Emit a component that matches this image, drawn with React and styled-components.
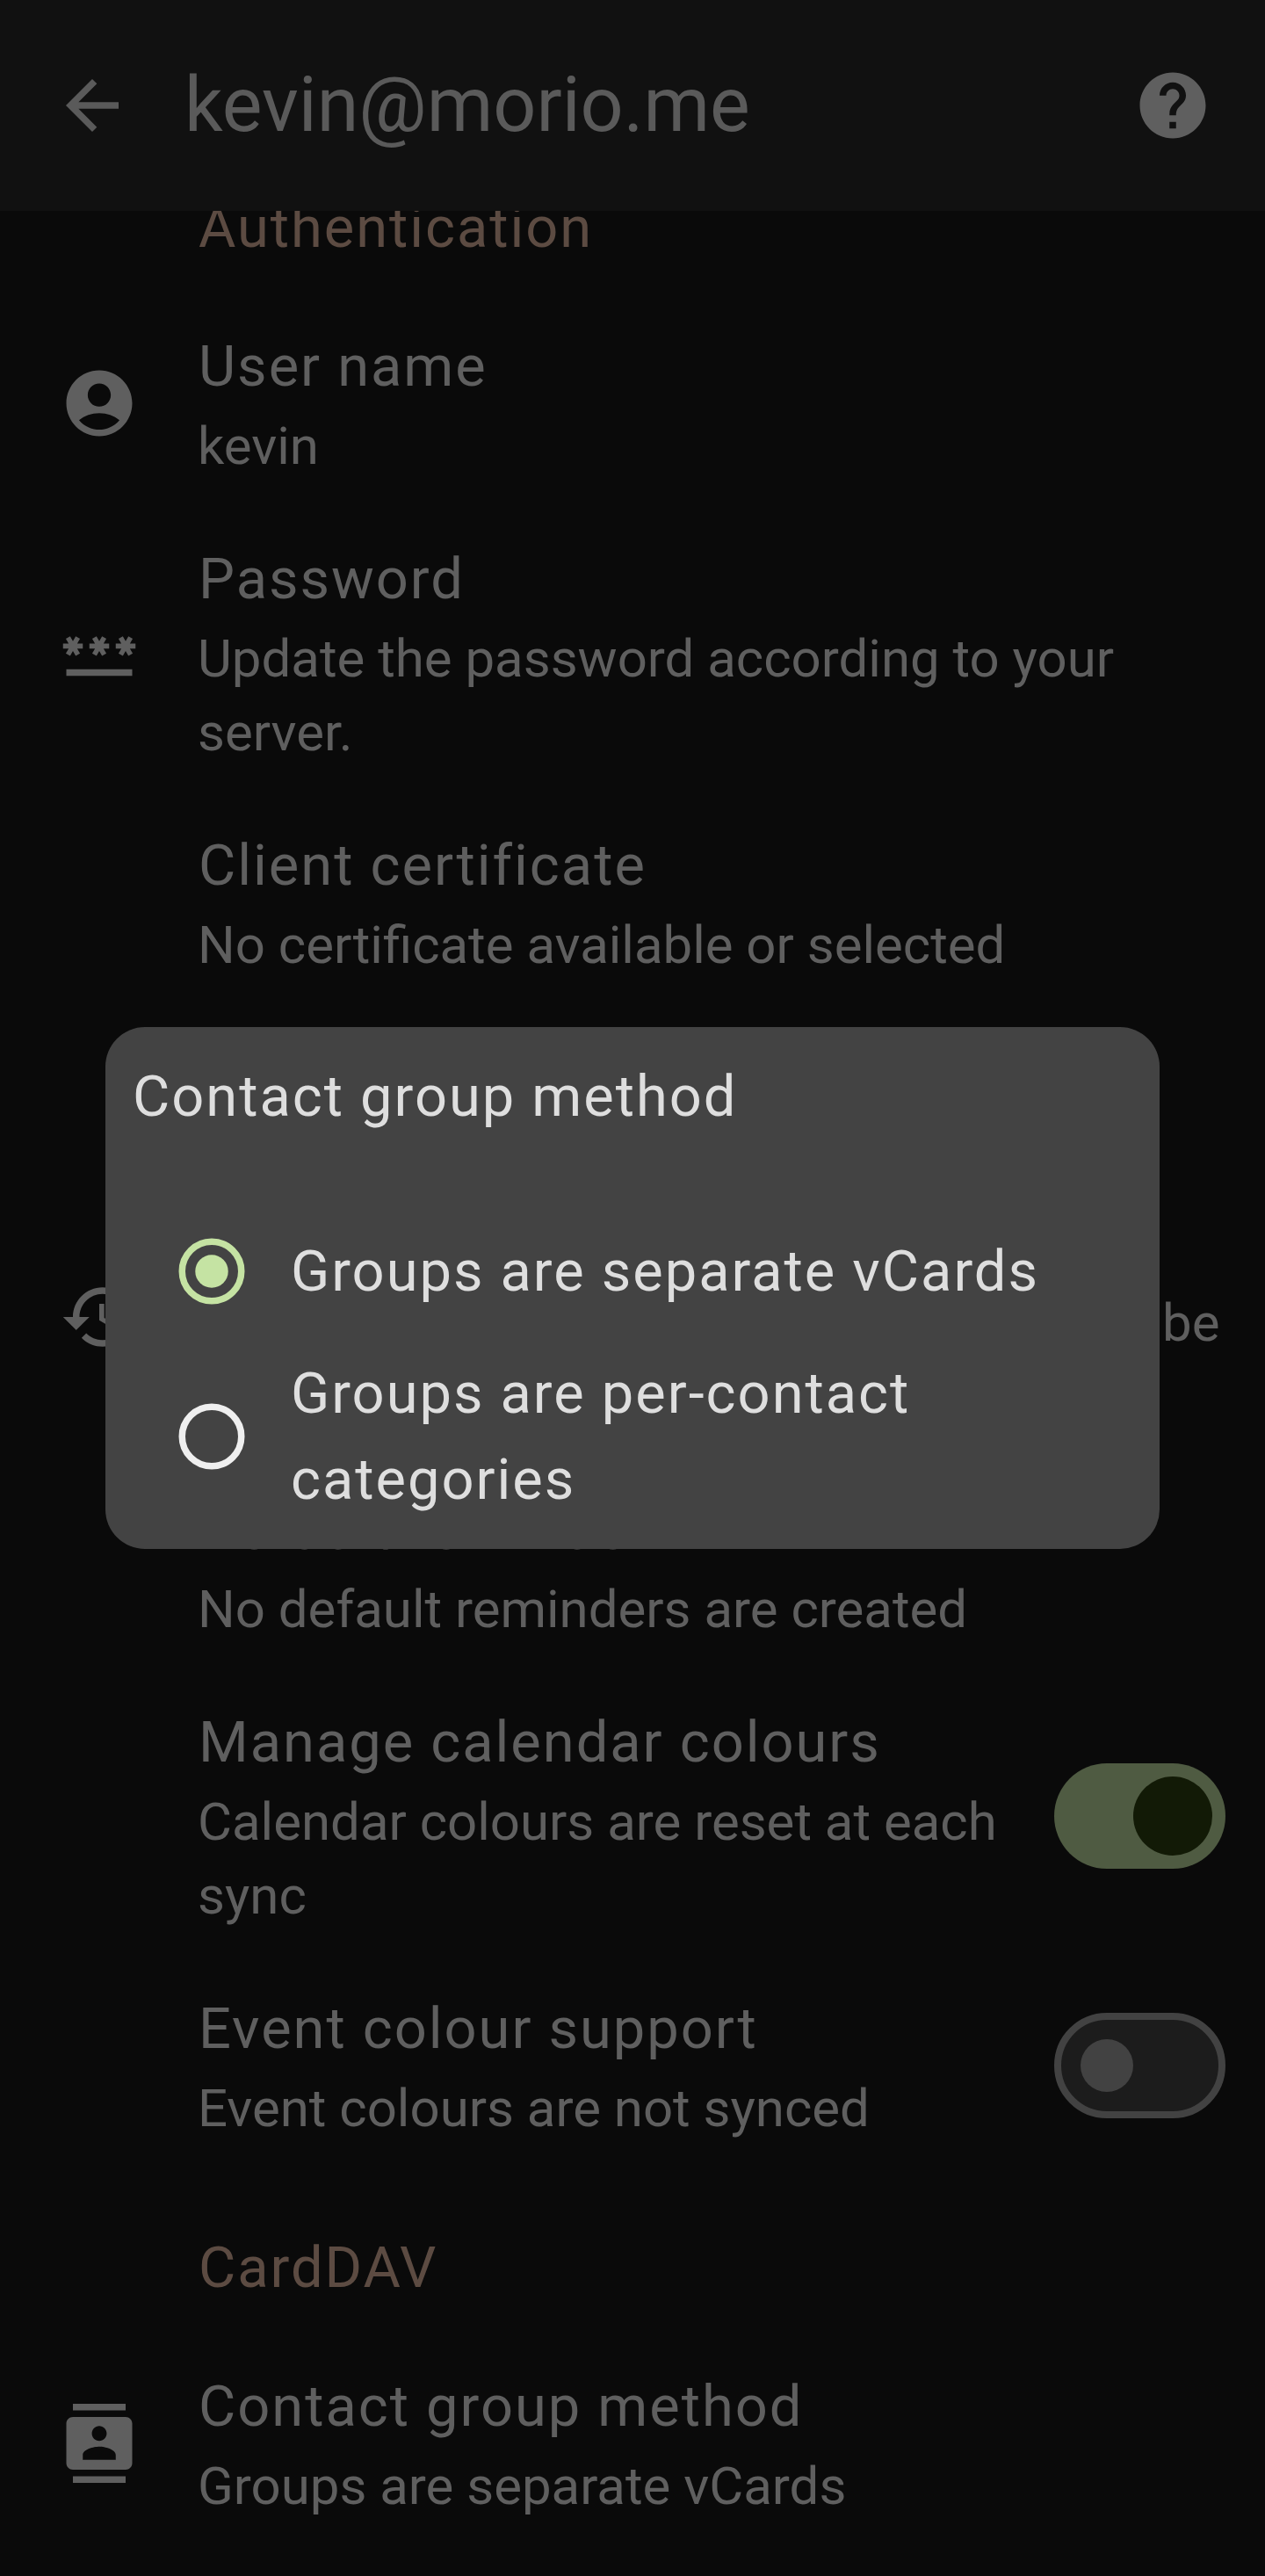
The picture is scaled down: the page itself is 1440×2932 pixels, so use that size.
import React from "react";
import styled, { createGlobalStyle } from "styled-components";

const GlobalStyle = createGlobalStyle`
  * { box-sizing: border-box; }
  html, body { margin: 0; padding: 0; background: #0a0a0a; }
  body { font-family: Roboto, "Noto Sans", sans-serif; font-weight: 400; overflow: hidden; }
`;

const Screen = styled.div`
  position: relative;
  width: 1440px;
  height: 2932px;
  overflow: hidden;
  background: #0a0a0a;
  color: #5f5f5f;
`;

const TopBar = styled.header`
  position: relative;
  z-index: 1;
  display: flex;
  align-items: center;
  height: 240px;
  padding: 0 60px;
  background: #111111;
`;

const AccountTitle = styled.h1`
  flex: 1;
  margin: 0 0 0 60px;
  font-size: 86.2px;
  font-weight: 400;
  line-height: 120px;
  color: #5a5a5a;
`;

const Icon = styled.svg`
  display: block;
  flex: none;
  width: 90px;
  height: 90px;
  fill: ${(p) => p.$color || "#5f5f5f"};
  overflow: visible;
`;

const Settings = styled.main`
  display: flex;
  flex-direction: column;
  margin-top: -90px;
`;

const SectionTitle = styled.h2`
  min-height: 188px;
  margin: 0;
  padding: 60px 0 30px 226px;
  font-size: 65px;
  font-weight: 400;
  line-height: 98px;
  letter-spacing: 1.95px;
  color: #5c4b42;
`;

const Row = styled.div`
  display: flex;
  align-items: center;
  padding: 30px 45px 30px 0;
`;

const Leading = styled.div`
  display: flex;
  flex: none;
  width: 225px;
  padding-left: 68px;
`;

const Texts = styled.div`
  flex: 1;
  min-width: 0;
`;

const RowTitle = styled.div`
  min-height: 98px;
  padding-left: 1px;
  font-size: 65px;
  line-height: 98px;
  letter-spacing: 1.97px;
  white-space: nowrap;
`;

const Summary = styled.div`
  min-height: ${(p) => p.$lines * 84}px;
  font-size: 59.95px;
  line-height: 84px;
  white-space: pre-line;
`;

const SwitchTrack = styled.div`
  display: flex;
  flex: none;
  align-items: center;
  justify-content: ${(p) => (p.$on ? "flex-end" : "flex-start")};
  width: 195px;
  height: 120px;
  padding: 0 ${(p) => (p.$on ? 15 : 22)}px;
  border: ${(p) => (p.$on ? "0" : "8px solid #424242")};
  border-radius: 60px;
  background: ${(p) => (p.$on ? "#4f5b42" : "#1c1c1c")};
`;

const SwitchThumb = styled.div`
  width: ${(p) => (p.$on ? 90 : 60)}px;
  height: ${(p) => (p.$on ? 90 : 60)}px;
  border-radius: 50%;
  background: ${(p) => (p.$on ? "#121a06" : "#424242")};
`;

const Scrim = styled.div`
  position: absolute;
  inset: 0;
  z-index: 2;
  display: flex;
  align-items: center;
  justify-content: center;
`;

const Dialog = styled.section`
  width: 1200px;
  padding: 30px;
  border-radius: 45px;
  background: #434343;
  color: #dedede;
`;

const DialogTitle = styled.h2`
  margin: 0 0 60px;
  padding-left: 1px;
  font-size: 65px;
  font-weight: 400;
  line-height: 98px;
  letter-spacing: 1.97px;
`;

const Option = styled.div`
  display: flex;
  align-items: center;
  min-height: 180px;
`;

const RadioSlot = styled.div`
  display: flex;
  flex: none;
  align-items: center;
  justify-content: center;
  width: 180px;
  padding-left: 1px;
`;

const RadioRing = styled.svg`
  display: block;
  width: 90px;
  height: 90px;
  color: ${(p) => (p.$selected ? "#c5e3a3" : "#efefef")};
`;

const OptionLabel = styled.div`
  flex: 1;
  padding-left: 1px;
  font-size: 65px;
  line-height: 98px;
  letter-spacing: 1.97px;
`;

const paths = {
  back: "M20,11H7.83l5.59-5.59L12,4l-8,8 8,8 1.41-1.41L7.83,13H20v-2z",
  help: "M12,2C6.48,2 2,6.48 2,12s4.48,10 10,10 10-4.48 10-10S17.52,2 12,2zM13,19h-2v-2h2v2zM15.07,11.25l-0.9,0.92C13.45,12.9 13,13.5 13,15h-2v-0.5c0-1.1 0.45-2.1 1.17-2.83l1.24-1.26c0.37-0.36 0.59-0.86 0.59-1.41 0-1.1-0.9-2-2-2s-2,0.9-2,2L8,9c0-2.21 1.79-4 4-4s4,1.79 4,4c0,0.88-0.36,1.68-0.93,2.25z",
  account:
    "M12,2C6.48,2 2,6.48 2,12s4.48,10 10,10 10-4.48 10-10S17.52,2 12,2zM12,6c1.93,0 3.5,1.57 3.5,3.5S13.93,13 12,13s-3.5-1.57-3.5-3.5S10.07,6 12,6zM12,20c-2.03,0-4.43-0.82-6.14-2.88C7.55,15.8 9.68,15 12,15s4.45,0.8 6.14,2.12C16.43,19.18 14.03,20 12,20z",
  password:
    "M2,17h20v2H2V17zM3.15,12.95L4,11.47l0.85,1.48l1.3-0.75L5.3,10.72H7v-1.5H5.3l0.85-1.47L4.85,7L4,8.47L3.15,7l-1.3,0.75L2.7,9.22H1v1.5h1.7L1.85,12.2L3.15,12.95zM9.85,12.2l1.3,0.75L12,11.47l0.85,1.48l1.3-0.75l-0.85-1.48H15v-1.5h-1.7l0.85-1.47L12.85,7L12,8.47L11.15,7l-1.3,0.75l0.85,1.47H9v1.5h1.7L9.85,12.2zM23,9.22h-1.7l0.85-1.47L20.85,7L20,8.47L19.15,7l-1.3,0.75l0.85,1.47H17v1.5h1.7l-0.85,1.48l1.3,0.75L20,11.47l0.85,1.48l1.3-0.75l-0.85-1.48H23V9.22z",
  history:
    "M13,3c-4.97,0-9,4.03-9,9L1,12l3.89,3.89 0.07,0.14L9,12L6,12c0-3.87 3.13-7 7-7s7,3.13 7,7-3.13,7-7,7c-1.93,0-3.68-0.79-4.94-2.06l-1.42,1.42C8.27,19.99 10.51,21 13,21c4.97,0 9-4.03 9-9s-4.03-9-9-9zM12,8v5l4.28,2.54 0.72-1.21-3.5-2.08L13.5,8L12,8z",
  contacts:
    "M20,0L4,0v2h16L20,0zM4,24h16v-2L4,22v2zM20,4L4,4c-1.1,0-2,0.9-2,2v12c0,1.1 0.9,2 2,2h16c1.1,0 2-0.9 2-2L22,6c0-1.1-0.9-2-2-2zM12,6.75c1.24,0 2.25,1.01 2.25,2.25s-1.01,2.25-2.25,2.25S9.75,10.24 9.75,9 10.76,6.75 12,6.75zM17,17L7,17v-1.5c0-1.67 3.33-2.5 5-2.5s5,0.83 5,2.5L17,17z",
};

function Glyph({ name, color }) {
  return (
    <Icon viewBox="0 0 24 24" $color={color} aria-hidden="true">
      <path fillRule="evenodd" d={paths[name]} />
    </Icon>
  );
}

function Setting({ icon, title, summary, lines = 1, toggle }) {
  return (
    <Row>
      <Leading>{icon && <Glyph name={icon} />}</Leading>
      <Texts>
        <RowTitle>{title}</RowTitle>
        <Summary $lines={lines}>{summary}</Summary>
      </Texts>
      {toggle && (
        <SwitchTrack $on={toggle === "on"}>
          <SwitchThumb $on={toggle === "on"} />
        </SwitchTrack>
      )}
    </Row>
  );
}

function RadioOption({ selected, children }) {
  return (
    <Option>
      <RadioSlot>
        <RadioRing $selected={selected} viewBox="0 0 24 24" aria-hidden="true">
          <circle cx="12" cy="12" r="9" fill="none" stroke="currentColor" strokeWidth="2" />
          {selected && <circle cx="12" cy="12" r="5" fill="currentColor" />}
        </RadioRing>
      </RadioSlot>
      <OptionLabel>{children}</OptionLabel>
    </Option>
  );
}

export default function App() {
  return (
    <Screen>
      <GlobalStyle />
      <TopBar>
        <Glyph name="back" color="#5a5a5a" />
        <AccountTitle>kevin@morio.me</AccountTitle>
        <Glyph name="help" />
      </TopBar>
      <Settings>
        <SectionTitle>Authentication</SectionTitle>
        <Setting icon="account" title="User name" summary="kevin" />
        <Setting
          icon="password"
          title="Password"
          summary={"Update the password according to your\nserver."}
          lines={2}
        />
        <Setting title="Client certificate" summary="No certificate available or selected" />
        <SectionTitle />
        <Setting icon="history" summary="Events more than 90 days in the past will be" lines={2} />
        <Setting title="Default reminder" summary="No default reminders are created" />
        <Setting
          title="Manage calendar colours"
          summary={"Calendar colours are reset at each\nsync"}
          lines={2}
          toggle="on"
        />
        <Setting title="Event colour support" summary="Event colours are not synced" toggle="off" />
        <SectionTitle>CardDAV</SectionTitle>
        <Setting icon="contacts" title="Contact group method" summary="Groups are separate vCards" />
      </Settings>
      <Scrim>
        <Dialog role="dialog">
          <DialogTitle>Contact group method</DialogTitle>
          <RadioOption selected>Groups are separate vCards</RadioOption>
          <RadioOption>Groups are per-contact categories</RadioOption>
        </Dialog>
      </Scrim>
    </Screen>
  );
}
